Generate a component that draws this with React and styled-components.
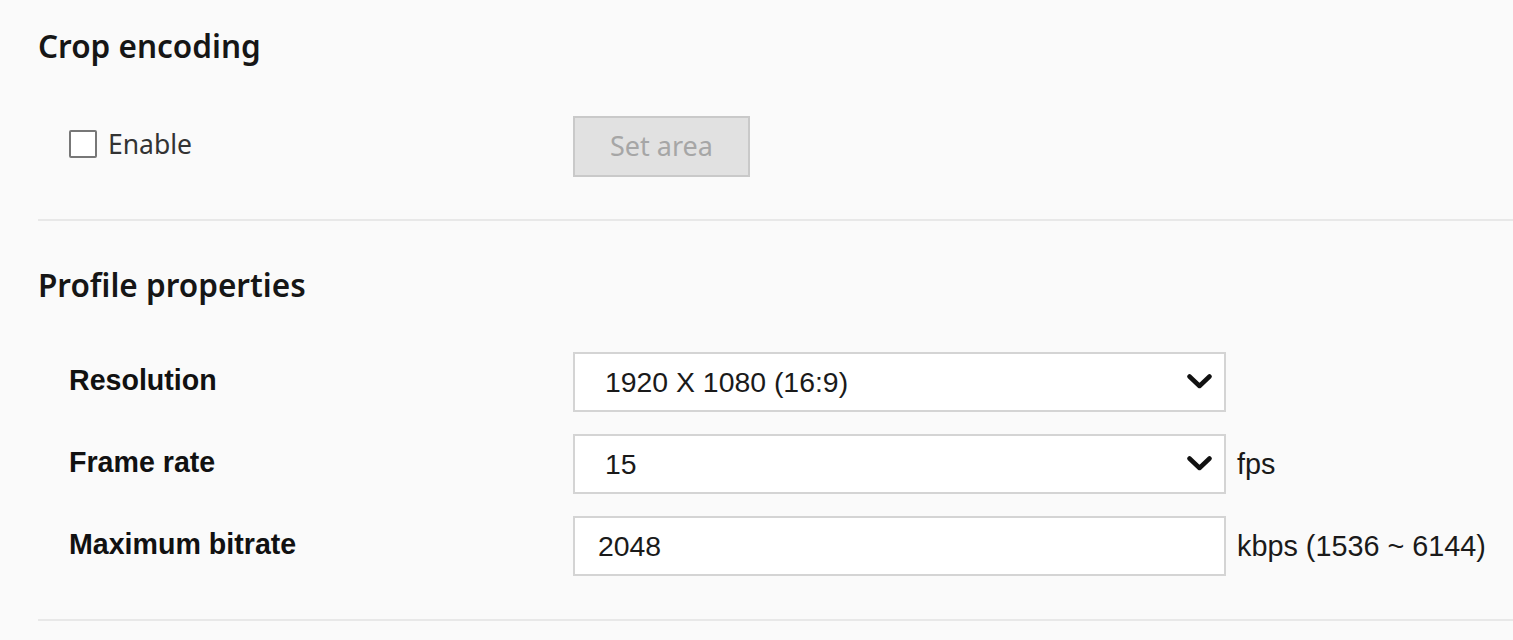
import styled, { createGlobalStyle } from 'styled-components'

const GlobalStyle = createGlobalStyle`
  body {
    margin: 0;
    background: #fafafa;
    font-family: "Liberation Sans", Arial, sans-serif;
    color: #1a1a1a;
  }
`

const Page = styled.div`
  padding: 24px 0 0 38px;
`

const Section = styled.section`
  border-bottom: 2px solid #e8e8e8;
  padding-bottom: ${(p) => p.$bottom}px;
  margin-bottom: ${(p) => p.$after}px;
`

const Heading = styled.h2`
  margin: 0 0 ${(p) => p.$gap}px;
  font-family: "Noto Sans", sans-serif;
  font-weight: 600;
  font-size: 31.5px;
  line-height: 44px;
  color: #161616;
`

const Rows = styled.div`
  display: flex;
  flex-direction: column;
  gap: 22px;
  padding-left: 31px;
`

const Row = styled.div`
  display: grid;
  grid-template-columns: 504px 653px auto;
  align-items: center;
  min-height: 60px;
`

const Label = styled.div`
  font-weight: bold;
  font-size: 28.6px;
  color: #111;
  margin-top: -4px;
`

const CheckLabel = styled.label`
  display: flex;
  align-items: center;
  gap: 11px;
  font-family: "Noto Sans", sans-serif;
  font-size: 26.5px;
  color: #333;
  margin-top: -6px;
`

const Box = styled.span`
  width: 28px;
  height: 28px;
  box-sizing: border-box;
  border: 2px solid #777;
  border-radius: 2px;
  background: #fff;
`

const Button = styled.button`
  width: 177px;
  height: 61px;
  box-sizing: border-box;
  background: #e1e1e1;
  border: 2px solid #c9c9c9;
  font-family: "Noto Sans", sans-serif;
  font-size: 27px;
  color: #a6a6a6;
  padding: 0 0 2px;
  cursor: default;
`

const Field = styled.div`
  position: relative;
  height: 60px;
  box-sizing: border-box;
  border: 2px solid #d4d4d4;
  background: #fff;
  display: flex;
  align-items: center;
  padding-left: ${(p) => p.$pad}px;
  font-size: 28.4px;
  color: #1a1a1a;
`

const Chevron = styled.svg`
  position: absolute;
  right: 12px;
  top: 50%;
  margin-top: -8px;
  width: 25px;
  height: 15px;
  pointer-events: none;
`

const Unit = styled.span`
  font-size: 28.8px;
  color: #1a1a1a;
  padding-left: 11px;
  white-space: nowrap;
`

function Select({ value }) {
  return (
    <Field $pad={30}>
      {value}
      <Chevron viewBox="0 0 25 15">
        <path d="M2.5 2.5 L12.5 12 L22.5 2.5" fill="none" stroke="#111" strokeWidth="4.5" strokeLinecap="round" strokeLinejoin="round" />
      </Chevron>
    </Field>
  )
}

export default function App() {
  return (
    <Page>
      <GlobalStyle />
      <Section $bottom={42} $after={42}>
        <Heading $gap={48}>Crop encoding</Heading>
        <Rows>
          <Row>
            <CheckLabel><Box />Enable</CheckLabel>
            <div><Button disabled>Set area</Button></div>
          </Row>
        </Rows>
      </Section>
      <Section $bottom={43} $after={0}>
        <Heading $gap={45}>Profile properties</Heading>
        <Rows>
          <Row>
            <Label>Resolution</Label>
            <Select value="1920 X 1080 (16:9)" />
          </Row>
          <Row>
            <Label>Frame rate</Label>
            <Select value="15" />
            <Unit>fps</Unit>
          </Row>
          <Row>
            <Label>Maximum bitrate</Label>
            <Field $pad={23}>2048</Field>
            <Unit>kbps (1536 ~ 6144)</Unit>
          </Row>
        </Rows>
      </Section>
    </Page>
  )
}
